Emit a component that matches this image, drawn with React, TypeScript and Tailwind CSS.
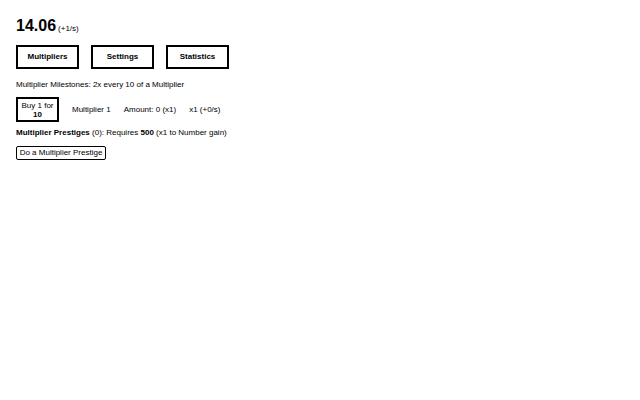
const tabs = ["Multipliers", "Settings", "Statistics"];

export default function App() {
  return (
    <div className="min-h-screen bg-white px-4 pt-[16px] text-black font-['Liberation_Sans',Arial,sans-serif]">
      {/* Number display */}
      <div className="flex items-baseline gap-[2px] h-[20px]">
        <span className="text-[16px] font-bold leading-[20px]">14.06</span>
        <span className="text-[8px] leading-[20px]">(+1/s)</span>
      </div>

      {/* Tabs */}
      <div className="mt-[9px] flex gap-[12px]">
        {tabs.map((t) => (
          <button
            key={t}
            className="w-[63px] h-[24px] border-2 border-black bg-white text-[8px] font-bold"
          >
            {t}
          </button>
        ))}
      </div>

      <p className="mt-[11px] text-[8px] leading-[10px]">
        Multiplier Milestones: 2x every 10 of a Multiplier
      </p>

      {/* Multiplier row */}
      <div className="mt-[7px] flex items-center gap-[13px] text-[8px]">
        <button className="w-[43px] h-[25px] p-0 border-2 border-black bg-white text-[8px] leading-[9px] whitespace-nowrap">
          Buy 1 for
          <br />
          <b>10</b>
        </button>
        <span>Multiplier 1</span>
        <span>Amount: 0 (x1)</span>
        <span>x1 (+0/s)</span>
      </div>

      <p className="mt-[6px] text-[8px] leading-[10px]">
        <b>Multiplier Prestiges</b> (0): Requires <b>500</b> (x1 to Number gain)
      </p>

      <button className="mt-[6px] w-[90px] h-[14px] p-0 rounded-[2px] border border-black bg-white text-[8px] leading-[12px]">
        Do a Multiplier Prestige
      </button>
    </div>
  );
}
